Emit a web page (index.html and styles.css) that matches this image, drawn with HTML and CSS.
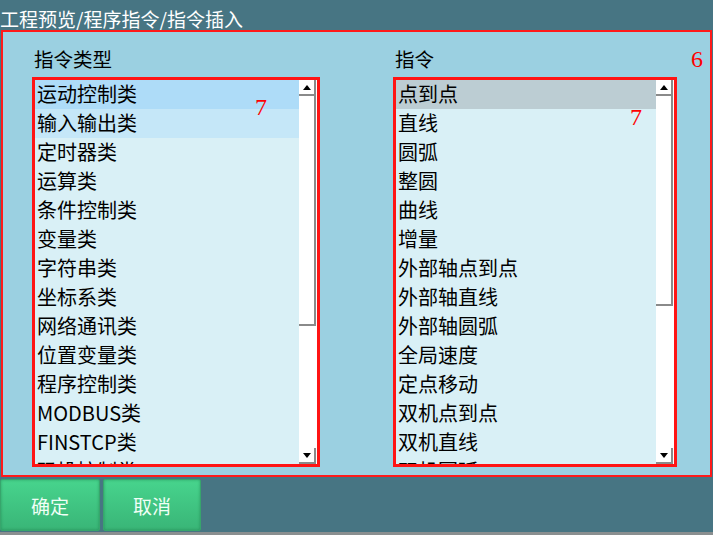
FILE: index.html
```html
<!DOCTYPE html>
<html lang="zh-CN">
<head>
  <meta charset="UTF-8">
  <title>指令插入</title>
  <link rel="stylesheet" href="styles.css">
</head>
<body>

  <div class="title">工程预览/程序指令/指令插入</div>

  <div class="panel">
    <span class="mark mark-panel">6</span>

    <div class="column col-left">
      <div class="label">指令类型</div>
      <div class="list-box">
        <ul class="items">
          <li class="selected">运动控制类</li>
          <li class="hover">输入输出类</li>
          <li>定时器类</li>
          <li>运算类</li>
          <li>条件控制类</li>
          <li>变量类</li>
          <li>字符串类</li>
          <li>坐标系类</li>
          <li>网络通讯类</li>
          <li>位置变量类</li>
          <li>程序控制类</li>
          <li>MODBUS类</li>
          <li>FINSTCP类</li>
          <li>码垛控制类</li>
        </ul>
        <div class="scrollbar">
          <div class="sb-btn sb-up"></div>
          <div class="sb-thumb thumb-left"></div>
          <div class="sb-track"></div>
          <div class="sb-btn sb-down"></div>
        </div>
        <span class="mark mark-list-left">7</span>
      </div>
    </div>

    <div class="column col-right">
      <div class="label">指令</div>
      <div class="list-box">
        <ul class="items">
          <li class="current">点到点</li>
          <li>直线</li>
          <li>圆弧</li>
          <li>整圆</li>
          <li>曲线</li>
          <li>增量</li>
          <li>外部轴点到点</li>
          <li>外部轴直线</li>
          <li>外部轴圆弧</li>
          <li>全局速度</li>
          <li>定点移动</li>
          <li>双机点到点</li>
          <li>双机直线</li>
          <li>双机圆弧</li>
        </ul>
        <div class="scrollbar">
          <div class="sb-btn sb-up"></div>
          <div class="sb-thumb thumb-right"></div>
          <div class="sb-track"></div>
          <div class="sb-btn sb-down"></div>
        </div>
        <span class="mark mark-list-right">7</span>
      </div>
    </div>
  </div>

  <div class="buttons">
    <button class="btn">确定</button>
    <button class="btn">取消</button>
  </div>

  <div class="bottom-strip"></div>

</body>
</html>
```

FILE: styles.css
```css
body {
  margin: 0;
  padding: 0;
  width: 713px;
  height: 535px;
  overflow: hidden;
  background-color: #477583;
  font-family: "Noto Sans CJK SC", "Microsoft YaHei", sans-serif;
}

.title {
  height: 30px;
  line-height: 38px;
  font-size: 19px;
  color: #ffffff;
  white-space: nowrap;
}

.panel {
  position: relative;
  box-sizing: border-box;
  width: 711px;
  height: 447px;
  margin-left: 1px;
  padding: 14px 0 0 29px;
  border: 2px solid #ff1a1a;
  background-color: #9bd0e1;
  display: flex;
  gap: 73px;
}

.column {
  display: flex;
  flex-direction: column;
}

.col-left {
  width: 288px;
}

.col-right {
  width: 284px;
}

.label {
  height: 26px;
  line-height: 26px;
  margin: 0 0 5px 2px;
  font-size: 19.5px;
  color: #000;
}

.list-box {
  position: relative;
  box-sizing: border-box;
  height: 390px;
  border: 3px solid #ff1414;
  background-color: #d9f0f6;
  display: flex;
  overflow: hidden;
}

.items {
  list-style-type: none;
  margin: 0;
  padding: 0;
  flex: 1;
  overflow: hidden;
}

.items li {
  height: 28px;
  line-height: 28px;
  padding: 0 0 1px 2px;
  font-size: 20px;
  color: #000;
  white-space: nowrap;
}

.items li.selected {
  background-color: #aedcf8;
}

.items li.hover {
  background-color: #c5e7f8;
}

.items li.current {
  background-color: #bccdd3;
}

.scrollbar {
  width: 18px;
  background-color: #ffffff;
  display: flex;
  flex-direction: column;
}

.sb-btn {
  box-sizing: border-box;
  height: 16px;
  width: 17px;
  border-right: 2px solid #8a8a8a;
  border-bottom: 2px solid #8a8a8a;
  display: flex;
  align-items: center;
  justify-content: center;
}

.sb-up::after {
  content: "";
  border-left: 4px solid transparent;
  border-right: 4px solid transparent;
  border-bottom: 5px solid #000;
}

.sb-down::after {
  content: "";
  border-left: 4px solid transparent;
  border-right: 4px solid transparent;
  border-top: 5px solid #000;
}

.sb-thumb {
  box-sizing: border-box;
  width: 17px;
  border-right: 2px solid #8a8a8a;
  border-bottom: 2px solid #8a8a8a;
}

.thumb-left {
  height: 230px;
}

.thumb-right {
  height: 210px;
}

.sb-track {
  flex: 1;
}

.mark {
  position: absolute;
  color: #ff0000;
  font-family: "Liberation Serif", serif;
  font-size: 24px;
  line-height: 1;
}

.mark-panel {
  left: 688px;
  top: 15px;
}

.mark-list-left {
  left: 220px;
  top: 15px;
}

.mark-list-right {
  left: 234px;
  top: 25px;
}

.buttons {
  display: flex;
  gap: 3px;
  margin-top: 2px;
}

.btn {
  width: 100px;
  height: 52px;
  padding: 0;
  border: 1px solid #37a56c;
  border-radius: 2px;
  background: linear-gradient(#47d48d, #39b577);
  color: #f0fff6;
  font-family: "Noto Sans CJK SC", sans-serif;
  font-size: 19px;
  box-shadow: inset 0 0 3px rgba(0, 80, 40, 0.35);
}

.btn:nth-child(2) {
  width: 98px;
}

.bottom-strip {
  height: 4px;
  margin-top: 1px;
  background-color: #8a8f90;
}
```
